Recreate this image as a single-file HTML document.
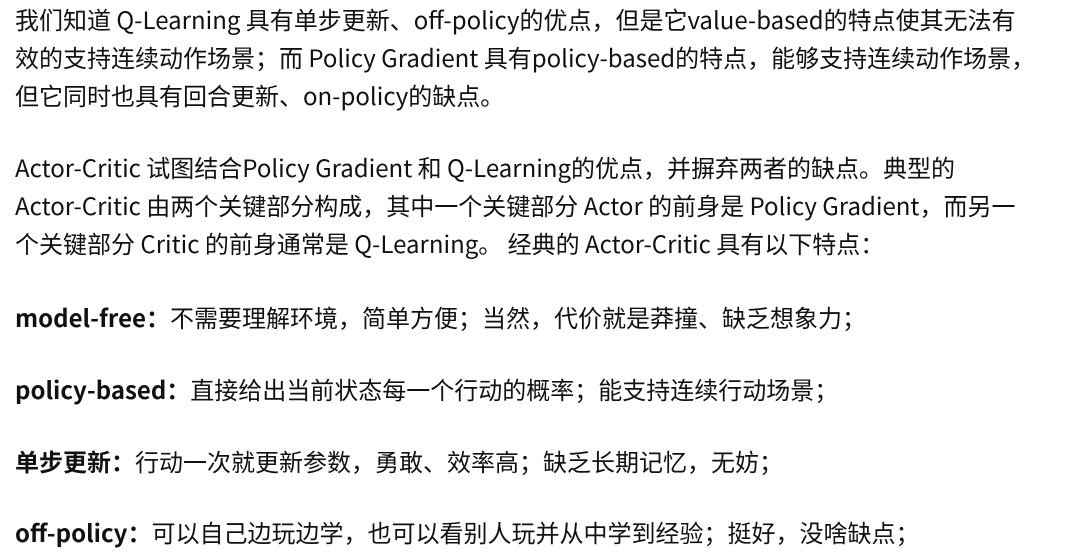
<!DOCTYPE html>
<html><head><meta charset="utf-8"><style>
body{margin:0;background:#fff;width:1076px;height:558px;overflow:hidden}
.w{position:absolute;left:15px;top:0;font-family:"Noto Sans CJK SC",sans-serif;font-size:24px;color:#111;white-space:nowrap}
.l{position:absolute;left:0;height:38px;line-height:38px}
b{font-weight:bold}
</style></head><body><div class="w">
<div class="l" style="top:0px">我们知道 Q-Learning 具有单步更新、off-policy的优点，但是它value-based的特点使其无法有</div>
<div class="l" style="top:38px">效的支持连续动作场景；而 Policy Gradient 具有policy-based的特点，能够支持连续动作场景，</div>
<div class="l" style="top:76px">但它同时也具有回合更新、on-policy的缺点。</div>
<div class="l" style="top:148px">Actor-Critic 试图结合Policy Gradient 和 Q-Learning的优点，并摒弃两者的缺点。典型的</div>
<div class="l" style="top:186px">Actor-Critic 由两个关键部分构成，其中一个关键部分 Actor 的前身是 Policy Gradient，而另一</div>
<div class="l" style="top:224px">个关键部分 Critic 的前身通常是 Q-Learning。 经典的 Actor-Critic 具有以下特点：</div>
<div class="l" style="top:298px"><b>model-free：</b>不需要理解环境，简单方便；当然，代价就是莽撞、缺乏想象力；</div>
<div class="l" style="top:370px"><b>policy-based：</b>直接给出当前状态每一个行动的概率；能支持连续行动场景；</div>
<div class="l" style="top:442px"><b>单步更新：</b>行动一次就更新参数，勇敢、效率高；缺乏长期记忆，无妨；</div>
<div class="l" style="top:513px"><b>off-policy：</b>可以自己边玩边学，也可以看别人玩并从中学到经验；挺好，没啥缺点；</div>
</div></body></html>
